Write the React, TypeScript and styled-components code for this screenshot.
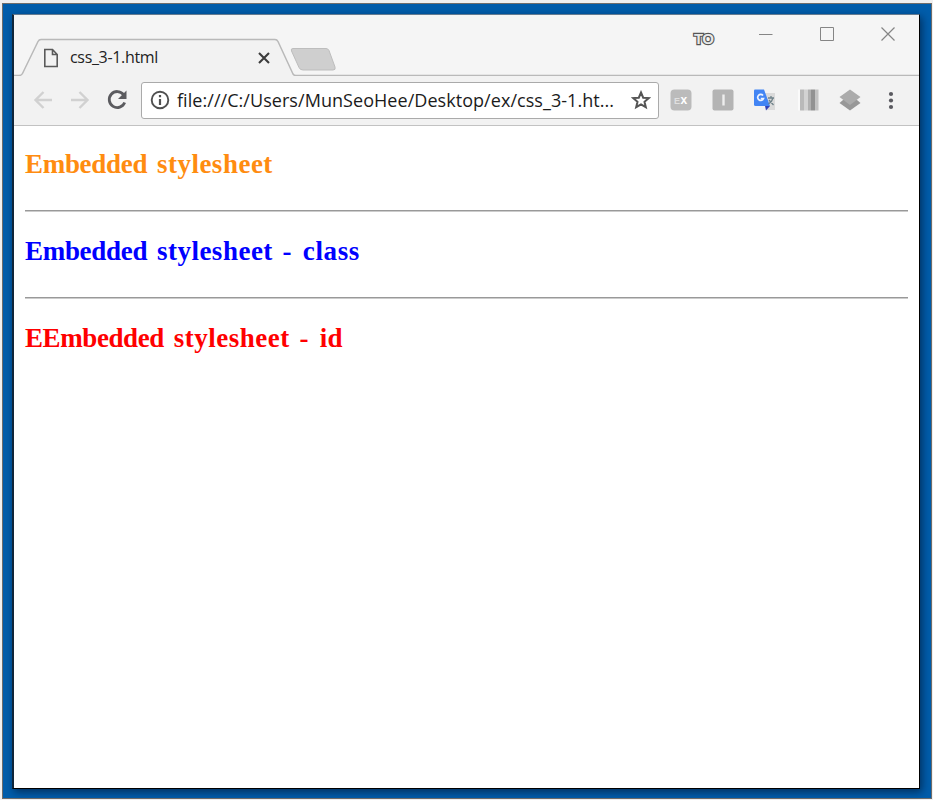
import React from "react";
import styled, { createGlobalStyle } from "styled-components";

const GlobalStyle = createGlobalStyle`
  * { box-sizing: border-box; }
  html, body { margin: 0; padding: 0; background: #f0f0f0; overflow: hidden; }
`;

const Desktop = styled.div`
  width: 933px;
  height: 800px;
  padding: 3px 1px 0 2px;
  background: #f0f0f0;
`;

const Wallpaper = styled.div`
  height: 796px;
  border: 1px solid #6f6d6b;
  background: #005dab;
  padding: 10px 10px 9px 9px;
`;

const Window = styled.div`
  width: 908px;
  height: 775px;
  border: 1px solid #000;
  border-left: 2px solid #10263a;
  border-top-color: #657b90;
  background: #fff;
  box-shadow: 2px 3px 8px rgba(0, 10, 30, 0.55);
  display: flex;
  flex-direction: column;
`;

const TabStrip = styled.header`
  height: 61px;
  flex: none;
  position: relative;
  background: #f5f5f5;
  display: flex;
  justify-content: space-between;
`;

const TabOutline = styled.svg`
  position: absolute;
  inset: 0;
`;

const Tab = styled.div`
  position: relative;
  width: 256px;
  height: 36px;
  margin: 25px 0 0 29px;
  display: flex;
  align-items: center;
`;

const TabTitle = styled.span`
  flex: 1;
  margin: -2px 0 0 11px;
  font: 16px/22px "Open Sans", "Noto Sans", sans-serif;
  letter-spacing: -0.33px;
  color: #222;
`;

const TabClose = styled.svg`
  margin-right: 29px;
`;

const Controls = styled.div`
  position: relative;
  height: 38px;
  display: flex;
  align-items: center;
  padding-right: 24px;
`;

const Badge = styled.svg`
  margin: 10px 43px 0 0;
`;

const Control = styled.svg<{ $gap?: number }>`
  margin-right: ${(p) => p.$gap ?? 0}px;
`;

const Toolbar = styled.nav`
  height: 50px;
  flex: none;
  display: flex;
  align-items: center;
  background: #f2f2f2;
  border-bottom: 1px solid #c2c2c2;
  padding: 0 0 1px 19px;
`;

const NavIcon = styled.svg`
  flex: none;
  margin-right: 17px;
`;

const AddressBar = styled.div`
  width: 518px;
  height: 37px;
  flex: none;
  margin-left: -3px;
  border: 1px solid #aaa;
  border-radius: 3px;
  background: #fff;
  display: flex;
  align-items: center;
  padding: 0 7px 0 8px;
`;

const Url = styled.span`
  flex: 1;
  margin-left: 7px;
  white-space: nowrap;
  font: 18px/28px "Open Sans", "Noto Sans", sans-serif;
  letter-spacing: 0.05px;
  color: #1b1b1b;
`;

const Extensions = styled.div`
  display: flex;
  align-items: center;
  margin-left: 11px;
`;

const Extension = styled.svg<{ $gap: number }>`
  margin-right: ${(p) => p.$gap}px;
`;

const Page = styled.main`
  flex: 1;
  padding: 20px 11px 0;
`;

const Heading = styled.h2<{ $color: string }>`
  margin: 0;
  height: 36px;
  font: bold 27px/36px "Liberation Serif", serif;
  word-spacing: 3px;
  color: ${(p) => p.$color};
  white-space: nowrap;
`;

const Word = styled.span<{ $spacing: number }>`
  letter-spacing: ${(p) => p.$spacing}px;
`;

const Rule = styled.hr`
  margin: 28px 0 21px;
  height: 2px;
  border: 0;
  border-top: 1px solid #999;
  border-bottom: 1px solid #ccc;
`;

export default function App() {
  return (
    <Desktop>
      <GlobalStyle />
      <Wallpaper>
        <Window>
          <TabStrip>
            <TabOutline width="905" height="61">
              <path d="M0 61.5H7L24 26.5Q25 24.5 27 24.5H261Q263 24.5 264 26.5L279 59Q280 60.5 282 60.5H905V61.5Z" fill="#f2f2f2" />
              <path d="M0 60.5H5Q7.5 60.5 8.5 58.5L24 26.5Q25 24.5 27 24.5H261Q263 24.5 264 26.5L279 59Q280 60.5 282 60.5H905" fill="none" stroke="#b9b9b9" strokeWidth="1.5" />
              <path d="M279 33.5H312Q314 33.5 315 35.5L321 52Q322 55 319 55H289Q286 55 285 52.5L277.5 36Q276.500 33.5 279 33.5Z" fill="#cfcfcf" stroke="#bdbdbd" />
            </TabOutline>
            <Tab>
              <svg width="16" height="20" viewBox="0 0 16 20" fill="none" stroke="#5a5a5a" strokeWidth="1.6">
                <path d="M1.800 1.500H9.500L14.200 6.500V18.500H1.800Z M9.500 1.500V6.500H14.200" />
              </svg>
              <TabTitle>css_3-1.html</TabTitle>
              <TabClose width="12" height="12" stroke="#3c3c3c" strokeWidth="2.1">
                <path d="M1 1L11 11M11 1L1 11" />
              </TabClose>
            </Tab>
            <Controls>
              <Badge width="24" height="18">
                <text x="2" y="14" fontFamily="Liberation Sans" fontSize="15" fontWeight="bold" textLength="20" fill="#e8e8e8" stroke="#555" strokeWidth="2.4" paintOrder="stroke">TO</text>
              </Badge>
              <Control $gap={47} width="14" height="14" stroke="#858585"><path d="M0 7.500H13.500" /></Control>
              <Control $gap={47} width="14" height="14" fill="none" stroke="#858585"><path d="M.5 .5H13.500V13.500H.5Z" /></Control>
              <Control width="14" height="14" stroke="#858585" strokeWidth="1.2"><path d="M.5 .5L13.500 13.500M13.500 .5L.5 13.500" /></Control>
            </Controls>
          </TabStrip>
          <Toolbar>
            <NavIcon width="20" height="20" fill="none" stroke="#d1d1d1" strokeWidth="2.4"><path d="M19 10H2.500M10.500 2L2.500 10L10.500 18" /></NavIcon>
            <NavIcon width="20" height="20" fill="none" stroke="#d1d1d1" strokeWidth="2.4"><path d="M1 10H17.500M9.500 2L17.500 10L9.500 18" /></NavIcon>
            <NavIcon width="20" height="20" fill="none" stroke="#5b5b5f" strokeWidth="2.800">
              <path d="M16.500 4.500A8 8 0 1 0 17.700 12.500" />
              <path d="M19.500 .5V9H11Z" fill="#5b5b5f" stroke="none" />
            </NavIcon>
            <AddressBar>
              <svg width="20" height="20" fill="none" stroke="#505050">
                <circle cx="10" cy="10" r="8.300" strokeWidth="1.900" />
                <path d="M10 9V15M10 5V7.200" strokeWidth="2.200" />
              </svg>
              <Url>file:///C:/Users/MunSeoHee/Desktop/ex/css_3-1.ht...</Url>
              <svg width="20" height="20" fill="none" stroke="#555" strokeWidth="2">
                <path d="M10 2.500L12.200 7.700L17.800 8.100L13.500 11.800L14.800 17.200L10 14.300L5.200 17.200L6.500 11.800L2.200 8.100L7.800 7.700Z" />
              </svg>
            </AddressBar>
            <Extensions>
              <Extension $gap={20} width="22" height="22">
                <rect x=".5" y=".5" width="21" height="21" rx="4" fill="#bbb" />
                <text x="4" y="14.500" fontFamily="Liberation Sans" fontSize="9" fontWeight="bold" fill="#e0e0e0">E</text>
                <text x="10.500" y="15" fontFamily="Liberation Sans" fontSize="12" fontWeight="bold" textLength="8" fill="#fff">x</text>
              </Extension>
              <Extension $gap={20} width="22" height="22">
                <rect x=".5" y=".5" width="21" height="21" rx="2" fill="#b4b4b4" />
                <path d="M11.500 5.500V16.500" stroke="#eee" strokeWidth="2.400" />
              </Extension>
              <Extension $gap={22} width="22" height="22">
                <path d="M9 4H21V21H13Z" fill="#dadada" />
                <path d="M11 17H16L12 21.500Z" fill="#3142b8" />
                <path d="M0 1.500Q0 .5 1 .5H10L16 17H1.500Q0 17 0 15.500Z" fill="#4285f4" />
                <path d="M9 6.500A3 3 0 1 0 9.500 9.500H6.800" fill="none" stroke="#eef4ff" strokeWidth="1.700" />
                <path d="M14 9H20M17 7V9M19 9Q18 13 14.500 15M15 11L19.500 16" fill="none" stroke="#70838a" strokeWidth="1.300" />
              </Extension>
              <Extension $gap={20} width="21" height="22">
                <path d="M0 .5H3V21.500H0Z" fill="#fafafa" />
                <path d="M2 .5H6V21.500H2Z" fill="#b9b9b9" />
                <path d="M6 .5H10V21.500H6Z" fill="#d2d2d2" />
                <path d="M10 .5H13V21.500H10Z" fill="#b0b0b0" />
                <path d="M13 .5H17V21.500H13Z" fill="#929292" />
                <path d="M17 .5H20.500V21.500H17Z" fill="#c3c3c3" />
              </Extension>
              <Extension $gap={27} width="22" height="22">
                <path d="M.5 14L4 11H18L21.500 14L11 21.500Z" fill="#989898" />
                <path d="M11 .5L21.500 8L11 16L.5 8Z" fill="#ababab" />
              </Extension>
              <Extension $gap={0} width="6" height="22" fill="#5a5a60">
                <circle cx="3" cy="5" r="2.100" /><circle cx="3" cy="11.500" r="2.100" /><circle cx="3" cy="18" r="2.100" />
              </Extension>
            </Extensions>
          </Toolbar>
          <Page>
            <Heading $color="#ff8c10"><Word $spacing={-0.3}>Embedded</Word> <Word $spacing={0.5}>stylesheet</Word></Heading>
            <Rule />
            <Heading $color="#0000ff"><Word $spacing={-0.3}>Embedded</Word> <Word $spacing={0.5}>stylesheet</Word> <Word $spacing={1.5}>-</Word> <Word $spacing={0.6}>class</Word></Heading>
            <Rule />
            <Heading $color="#ff0000"><Word $spacing={-0.4}>EEmbedded</Word> <Word $spacing={0.5}>stylesheet</Word> <Word $spacing={1.5}>-</Word> <Word $spacing={0.3}>id</Word></Heading>
          </Page>
        </Window>
      </Wallpaper>
    </Desktop>
  );
}
